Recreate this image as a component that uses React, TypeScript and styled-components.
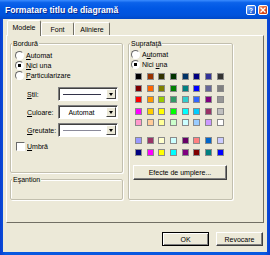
import React from "react";
import styled, { createGlobalStyle, css } from "styled-components";

const GlobalStyle = createGlobalStyle`
  html, body {
    margin: 0;
    padding: 0;
    background: #fff;
  }
  body {
    font-family: "Liberation Sans", Arial, sans-serif;
    font-size: 7px;
    color: #000;
  }
`;

const BG = "#ece9d8";

const Frame = styled.div`
  width: 270px;
  height: 255px;
  display: flex;
  flex-direction: column;
  background: linear-gradient(90deg, #0a3ed0, #0858e0 2%, #0858e0 98%, #0a3ed0);
`;

const TitleBar = styled.div`
  height: 19px;
  flex: none;
  display: flex;
  align-items: center;
  gap: 2px;
  padding: 1px 2px 0 5px;
  box-sizing: border-box;
  background: linear-gradient(#3b8cff 0%, #0b62ea 14%, #0057e4 45%, #0053dc 80%, #0048c8 100%);
`;

const Title = styled.span`
  flex: 1;
  color: #fff;
  font: bold 8.6px "Liberation Sans", Arial, sans-serif;
  text-shadow: 1px 1px 0 #0f2a8a;
  white-space: nowrap;
`;

const CapButton = styled.div<{ $kind: "help" | "close" }>`
  width: 10px;
  height: 10px;
  box-sizing: border-box;
  border: 1px solid #fff;
  border-radius: 2px;
  display: flex;
  align-items: center;
  justify-content: center;
  color: #fff;
  font: bold 7px "Liberation Sans", Arial, sans-serif;
  background: ${({ $kind }) =>
    $kind === "close"
      ? "linear-gradient(135deg, #f5a47c, #e2501e 55%, #c43a10)"
      : "linear-gradient(135deg, #8ab8ff, #2d72ea 55%, #1d58cc)"};
`;

const Body = styled.div`
  flex: 1;
  margin: 0 3px 3px;
  background: ${BG};
  padding: 1px 3px 0;
  display: flex;
  flex-direction: column;
`;

const TabStrip = styled.div`
  height: 15px;
  display: flex;
  align-items: flex-end;
  padding-left: 1px;
`;

const Tab = styled.div<{ $active?: boolean; $w: number }>`
  width: ${({ $w }) => $w}px;
  box-sizing: border-box;
  height: ${({ $active }) => ($active ? 16 : 13)}px;
  margin-bottom: ${({ $active }) => ($active ? -1 : 0)}px;
  display: flex;
  align-items: center;
  justify-content: center;
  background: ${BG};
  border: 1px solid;
  border-bottom: none;
  border-color: #fff #716f64 transparent #fff;
  border-radius: 2px 2px 0 0;
  position: relative;
  z-index: ${({ $active }) => ($active ? 1 : 0)};
  padding-bottom: ${({ $active }) => ($active ? 2 : 0)}px;
`;

const Panel = styled.div`
  height: 188px;
  box-sizing: border-box;
  border: 1px solid;
  border-color: #fff #716f64 #716f64 #fff;
  padding: 3px 0 0 3px;
  display: flex;
  align-items: flex-start;
  gap: 5px;
`;

const Column = styled.div`
  width: 113px;
  display: flex;
  flex-direction: column;
  gap: 2px;
`;

const Group = styled.fieldset<{ $h: number; $w: number }>`
  margin: 0;
  padding: 0;
  width: ${({ $w }) => $w}px;
  height: ${({ $h }) => $h}px;
  box-sizing: border-box;
  min-inline-size: 0;
  border: 1px solid #c2bfae;
  border-radius: 2px;
  box-shadow: inset 1px 1px 0 #fff, 1px 1px 0 #fff;
`;

const Legend = styled.legend`
  padding: 0 1px;
  margin-left: 1px;
  line-height: 9px;
  background: ${BG};
`;

const GroupBody = styled.div<{ $pl: number; $pt: number }>`
  padding: ${({ $pt }) => $pt}px 0 0 ${({ $pl }) => $pl}px;
  display: flex;
  flex-direction: column;
`;

const OptionRow = styled.label<{ $mt?: number }>`
  height: 10px;
  margin-top: ${({ $mt }) => $mt ?? 0}px;
  display: flex;
  align-items: center;
  gap: 2px;
  white-space: nowrap;
`;

const Radio = styled.span<{ $on?: boolean }>`
  width: 9px;
  height: 9px;
  flex: none;
  box-sizing: border-box;
  border-radius: 50%;
  border: 1px solid;
  border-color: #6a6a6a #fff #fff #6a6a6a;
  background: ${({ $on }) =>
    $on ? "radial-gradient(circle, #000 0 1.4px, #fff 2px)" : "#fff"};
`;

const Check = styled.span`
  width: 9px;
  height: 9px;
  flex: none;
  margin-left: 1px;
  box-sizing: border-box;
  border: 1px solid;
  border-color: #6a6a6a #fff #fff #6a6a6a;
  background: #fff;
`;

const U = styled.span`
  text-decoration: underline;
`;

const Fields = styled.div`
  margin: 7px 0 0 12px;
  display: flex;
  flex-direction: column;
  gap: 4px;
`;

const FieldRow = styled.div`
  height: 14px;
  display: flex;
  align-items: center;
`;

const FieldLabel = styled.span`
  width: 31px;
`;

const Combo = styled.div`
  width: 60px;
  height: 14px;
  box-sizing: border-box;
  border: 1px solid;
  border-color: #808080 #fff #fff #808080;
  box-shadow: inset 1px 1px 0 #404040;
  background: #fff;
  display: flex;
  align-items: center;
  padding: 1px 1px 1px 2px;
`;

const ComboValue = styled.div`
  flex: 1;
  display: flex;
  align-items: center;
  justify-content: center;
  padding-right: 4px;
`;

const LineSample = styled.div<{ $color: string }>`
  width: 38px;
  height: 1px;
  background: ${({ $color }) => $color};
`;

const DropBtn = styled.div`
  width: 10px;
  height: 10px;
  box-sizing: border-box;
  background: ${BG};
  border: 1px solid;
  border-color: #fff #404040 #404040 #fff;
  display: flex;
  align-items: center;
  justify-content: center;
  &::before {
    content: "";
    border-left: 2.5px solid transparent;
    border-right: 2.5px solid transparent;
    border-top: 3px solid #000;
  }
`;

const Palette = styled.div<{ $mt: number }>`
  margin: ${({ $mt }) => $mt}px 0 0 4px;
  display: grid;
  grid-template-columns: repeat(8, 7px);
  grid-auto-rows: 7px;
  column-gap: 4.7px;
  row-gap: 4.6px;
`;

const Swatch = styled.div<{ $c: string }>`
  box-sizing: border-box;
  border: 1px solid #8a8a8a;
  background: ${({ $c }) => $c};
`;

const Btn = styled.button<{ $primary?: boolean; $w: number; $h: number }>`
  width: ${({ $w }) => $w}px;
  height: ${({ $h }) => $h}px;
  box-sizing: border-box;
  padding: 0;
  font: 7px "Liberation Sans", Arial, sans-serif;
  color: #000;
  background: ${BG};
  border: 1px solid;
  border-color: #fff #404040 #404040 #fff;
  box-shadow: inset -1px -1px 0 #808080;
  ${({ $primary }) =>
    $primary &&
    css`
      border-color: #000;
      box-shadow: inset 1px 1px 0 #fff, inset -1px -1px 0 #808080;
    `}
`;

const FillBtnWrap = styled.div`
  margin: 9.4px 0 0 2px;
`;

const Footer = styled.div`
  margin-top: 9px;
  padding-right: 1px;
  display: flex;
  justify-content: flex-end;
  gap: 7px;
`;

const mainColors = [
  "#000000", "#993300", "#333300", "#003300", "#003366", "#000080", "#333399", "#333333",
  "#800000", "#ff6600", "#808000", "#008000", "#008080", "#0000ff", "#666699", "#808080",
  "#ff0000", "#ff9900", "#99cc00", "#339966", "#33cccc", "#3366ff", "#800080", "#969696",
  "#ff00ff", "#ffcc00", "#ffff00", "#00ff00", "#00ffff", "#00ccff", "#993366", "#c0c0c0",
  "#ff99cc", "#ffcc99", "#ffff99", "#ccffcc", "#ccffff", "#99ccff", "#cc99ff", "#ffffff",
];

const chartColors = [
  "#9999ff", "#993366", "#ffffcc", "#ccffff", "#660066", "#ff8080", "#0066cc", "#ccccff",
  "#000080", "#ff00ff", "#ffff00", "#00ffff", "#800080", "#800000", "#008080", "#0000ff",
];

export default function App() {
  return (
    <>
      <GlobalStyle />
      <Frame>
        <TitleBar>
          <Title>Formatare titlu de diagramă</Title>
          <CapButton $kind="help">?</CapButton>
          <CapButton $kind="close">
            <svg width="6" height="6" viewBox="0 0 6 6">
              <path d="M0.5 0.5 L5.5 5.5 M5.5 0.5 L0.5 5.5" stroke="#fff" strokeWidth="1.4" />
            </svg>
          </CapButton>
        </TitleBar>
        <Body>
          <TabStrip>
            <Tab $active $w={34}>Modele</Tab>
            <Tab $w={33}>Font</Tab>
            <Tab $w={36}>Aliniere</Tab>
          </TabStrip>
          <Panel>
            <Column>
              <Group $w={113} $h={134}>
                <Legend>Bordură</Legend>
                <GroupBody $pl={4} $pt={2}>
                  <OptionRow>
                    <Radio />
                    <span><U>A</U>utomat</span>
                  </OptionRow>
                  <OptionRow>
                    <Radio $on />
                    <span><U>N</U>ici una</span>
                  </OptionRow>
                  <OptionRow>
                    <Radio />
                    <span><U>P</U>articularizare</span>
                  </OptionRow>
                  <Fields>
                    <FieldRow>
                      <FieldLabel><U>S</U>til:</FieldLabel>
                      <Combo>
                        <ComboValue><LineSample $color="#33334a" /></ComboValue>
                        <DropBtn />
                      </Combo>
                    </FieldRow>
                    <FieldRow>
                      <FieldLabel><U>C</U>uloare:</FieldLabel>
                      <Combo>
                        <ComboValue>Automat</ComboValue>
                        <DropBtn />
                      </Combo>
                    </FieldRow>
                    <FieldRow>
                      <FieldLabel><U>G</U>reutate:</FieldLabel>
                      <Combo>
                        <ComboValue><LineSample $color="#8a8a9a" /></ComboValue>
                        <DropBtn />
                      </Combo>
                    </FieldRow>
                  </Fields>
                  <OptionRow $mt={4}>
                    <Check />
                    <span><U>U</U>mbră</span>
                  </OptionRow>
                </GroupBody>
              </Group>
              <Group $w={113} $h={25}>
                <Legend>Eşantion</Legend>
              </Group>
            </Column>
            <Group $w={105} $h={161}>
              <Legend>Suprafaţă</Legend>
              <GroupBody $pl={2} $pt={1}>
                <OptionRow>
                  <Radio />
                  <span>A<U>u</U>tomat</span>
                </OptionRow>
                <OptionRow>
                  <Radio $on />
                  <span>Nici <U>u</U>na</span>
                </OptionRow>
                <Palette $mt={4}>
                  {mainColors.map((c, i) => (
                    <Swatch key={i} $c={c} />
                  ))}
                </Palette>
                <Palette $mt={10.6}>
                  {chartColors.map((c, i) => (
                    <Swatch key={i} $c={c} />
                  ))}
                </Palette>
                <FillBtnWrap>
                  <Btn $w={94} $h={15}>Efecte de umplere...</Btn>
                </FillBtnWrap>
              </GroupBody>
            </Group>
          </Panel>
          <Footer>
            <Btn $primary $w={47} $h={14}>OK</Btn>
            <Btn $w={47} $h={14}>Revocare</Btn>
          </Footer>
        </Body>
      </Frame>
    </>
  );
}
